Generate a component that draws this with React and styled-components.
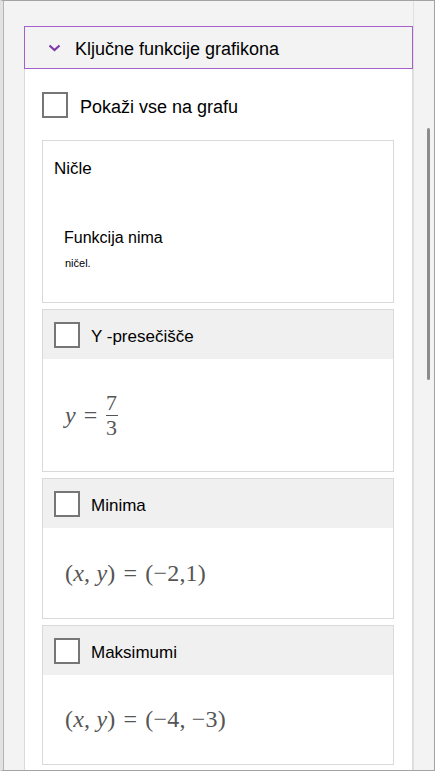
import React from "react";
import styled, { createGlobalStyle } from "styled-components";

const GlobalStyle = createGlobalStyle`
  html, body {
    margin: 0;
    padding: 0;
    background: #f3f3f3;
  }
  body {
    font-family: "Segoe UI", "Liberation Sans", Arial, sans-serif;
    color: #000;
  }
`;

function getFeatures() {
  return [
    {
      title: "Y -presečišče",
      height: 163,
      math: (
        <>
          <I>y</I>
          <Op>=</Op>
          <Fraction>
            <span>7</span>
            <Bar />
            <span>3</span>
          </Fraction>
        </>
      ),
    },
    {
      title: "Minima",
      height: 141,
      math: (
        <>
          (<I>x</I>, <I>y</I>)<Op>=</Op>(−2,1)
        </>
      ),
    },
    {
      title: "Maksimumi",
      height: 140,
      math: (
        <>
          (<I>x</I>, <I>y</I>)<Op>=</Op>(−4, −3)
        </>
      ),
    },
  ];
}

function Checkbox({ size }) {
  return <Box size={size} />;
}

function FeatureCard({ feature }) {
  return (
    <Card height={feature.height}>
      <CardHeader>
        <Checkbox size={26} />
        <CardTitle>{feature.title}</CardTitle>
      </CardHeader>
      <CardBody>
        <Formula>{feature.math}</Formula>
      </CardBody>
    </Card>
  );
}

export default function App() {
  const features = getFeatures();
  return (
    <>
      <GlobalStyle />
      <Frame>
        <Content>
          <Header>
            <svg width="13" height="8" viewBox="0 0 13 8">
              <polyline
                points="1.5 1.5 6.5 6 11.5 1.5"
                fill="none"
                stroke="#7b3aa8"
                strokeWidth="2.2"
              />
            </svg>
            <HeaderTitle>Ključne funkcije grafikona</HeaderTitle>
          </Header>
          <Panel>
            <ShowAllRow>
              <Checkbox size={26} />
              <ShowAllLabel>Pokaži vse na grafu</ShowAllLabel>
            </ShowAllRow>
            <Cards>
              <Card height={163}>
                <ZeroTitle>Ničle</ZeroTitle>
                <ZeroText>Funkcija nima</ZeroText>
                <ZeroSmall>ničel.</ZeroSmall>
              </Card>
              {features.map((f) => (
                <FeatureCard key={f.title} feature={f} />
              ))}
            </Cards>
          </Panel>
        </Content>
        <Gutter>
          <Thumb />
        </Gutter>
      </Frame>
    </>
  );
}

const Frame = styled.div`
  box-sizing: border-box;
  width: 435px;
  height: 771px;
  border: 1px solid #a3a3a3;
  border-left: 3px solid #e2e2e2;
  box-shadow: inset 1px 0 0 #b5b5b5;
  background: #f3f3f3;
  display: grid;
  grid-template-columns: 1fr 21px;
  overflow: hidden;
`;

const Content = styled.div`
  padding: 25px 0 0 21px;
  display: flex;
  flex-direction: column;
  min-height: 0;
`;

const Header = styled.div`
  box-sizing: border-box;
  height: 43px;
  border: 1.5px solid #a65fcb;
  background: #f3f3f3;
  display: flex;
  align-items: center;
  padding-left: 23px;
  gap: 14px;

  svg {
    margin-top: 1px;
  }
`;

const HeaderTitle = styled.span`
  font-size: 18px;
  color: #000;
  margin-top: 4px;
`;

const Panel = styled.div`
  flex: 1;
  background: #fff;
  border-left: 1px solid #dadada;
  border-right: 1px solid #dadada;
  padding: 23px 18px 0 17px;
`;

const ShowAllRow = styled.div`
  display: flex;
  align-items: center;
  gap: 12px;
`;

const ShowAllLabel = styled.span`
  font-size: 18px;
  color: #000;
  margin-top: 5px;
`;

const Box = styled.div`
  box-sizing: border-box;
  width: ${(p) => p.size}px;
  height: ${(p) => p.size}px;
  border: 2px solid #767676;
  background: #fff;
  flex-shrink: 0;
`;

const Cards = styled.div`
  margin-top: 22px;
  display: flex;
  flex-direction: column;
  gap: 6px;
`;

const Card = styled.div`
  box-sizing: border-box;
  height: ${(p) => p.height}px;
  border: 1px solid #d9d9d9;
  background: #fff;
  display: flex;
  flex-direction: column;
`;

const ZeroTitle = styled.div`
  font-size: 17px;
  margin: 18px 0 0 11px;
`;

const ZeroText = styled.div`
  font-size: 16px;
  margin: 50px 0 0 21px;
`;

const ZeroSmall = styled.div`
  font-size: 11px;
  margin: 10px 0 0 22px;
`;

const CardHeader = styled.div`
  height: 49px;
  flex-shrink: 0;
  background: #f0f0f0;
  display: flex;
  align-items: center;
  padding-left: 11px;
  gap: 11px;
`;

const CardTitle = styled.span`
  font-size: 17px;
  color: #000;
  margin-top: 4px;
`;

const CardBody = styled.div`
  flex: 1;
  display: flex;
  align-items: center;
  padding-left: 22px;
`;

const Formula = styled.div`
  font-family: "Liberation Serif", "DejaVu Serif", serif;
  font-size: 24px;
  color: #555;
  display: flex;
  align-items: center;
  white-space: pre;
  letter-spacing: 0.2px;
`;

const I = styled.i`
  font-style: italic;
`;

const Op = styled.span`
  margin: 0 8px;
`;

const Fraction = styled.span`
  display: inline-flex;
  flex-direction: column;
  align-items: center;
  line-height: 21px;
  font-size: 22px;
`;

const Bar = styled.span`
  width: 12px;
  height: 1.5px;
  background: #555;
  margin: 2px 0 1px;
`;

const Gutter = styled.div`
  border-left: 1px solid #e0e0e0;
  padding: 127px 0 0 13px;
`;

const Thumb = styled.div`
  width: 3px;
  height: 252px;
  border-radius: 2px;
  background: #8c8c8c;
`;
